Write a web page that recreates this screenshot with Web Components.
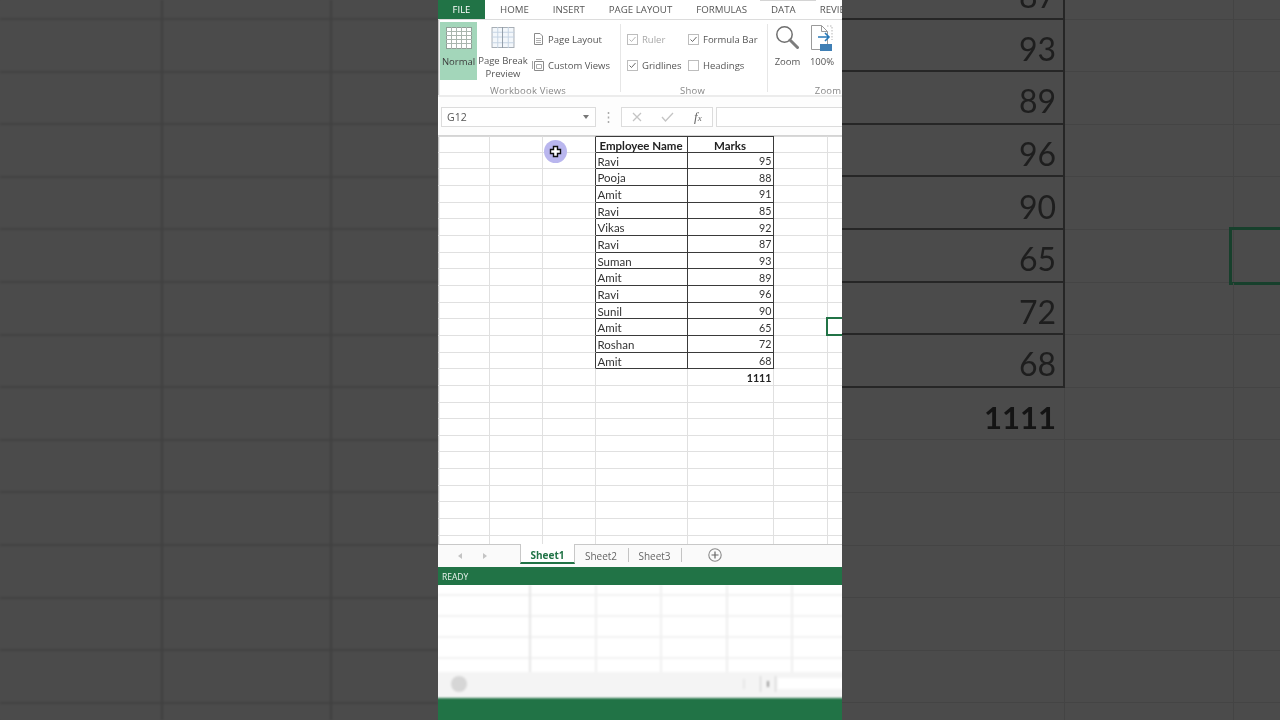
<!DOCTYPE html>
<html lang="en"><head><meta charset="utf-8"><title>Excel</title>
<style>
html,body{margin:0;padding:0;width:1280px;height:720px;overflow:hidden;background:#4b4b4b}
body{display:flex;font-family:"Open Sans","Liberation Sans",sans-serif}
</style></head><body>
<x-ghost-left></x-ghost-left>
<x-app></x-app>
<x-ghost-right></x-ghost-right>
<script>
function def(tag,html,setup){
  customElements.define(tag,class extends HTMLElement{
    constructor(){super();const r=this.attachShadow({mode:'open'});r.innerHTML=html;if(setup)setup(r,this);}
  });
}
def('x-ghost-left',`<style>:host{display:block;flex:0 0 438px;height:720px;filter:blur(.8px);
background:
 linear-gradient(90deg,transparent 161px,#3f3f3f 161px,#3f3f3f 163px,transparent 163px,transparent 330px,#3f3f3f 330px,#3f3f3f 332px,transparent 332px),
 repeating-linear-gradient(180deg,#414141 0,#414141 2px,transparent 2px,transparent 52.6px) 0 18px,
 #4b4b4b;background-repeat:no-repeat,repeat,repeat}</style>`);

def('x-ghost-right',`<style>
:host{display:block;flex:0 0 438px;height:720px;overflow:hidden;background:#4b4b4b}
.g{display:grid;grid-template-columns:223px 169px 56px;grid-auto-rows:52.6px;margin:-33px 0 0 -4px;padding-left:4px;filter:blur(.7px)}
.c{box-sizing:border-box;border-bottom:1px solid #444;border-right:1px solid #444;position:relative}
.n{display:flex;align-items:center;justify-content:flex-end;padding:8px 7px 0 0;font:32px/1 Lato,"Liberation Sans",sans-serif;color:#1e1e1e}
.t{border-bottom:2.500px solid #262626;border-right:2.500px solid #262626}
.b{font-weight:700;font-size:31px;color:#141414;padding-right:8px}
.sel{position:absolute;left:-5px;top:-3px;width:70px;height:58px;box-sizing:border-box;border:3px solid #17402c}
</style><div class="g" id="g"></div>`,r=>{
  const g=r.getElementById('g');let h='';
  ['87','93','89','96','90','65','72','68'].forEach(v=>{
    h+=`<div class="c n t">${v}</div><div class="c"></div><div class="c">${v==='65'?'<div class="sel"></div>':''}</div>`;
  });
  h+=`<div class="c n b">1111</div><div class="c"></div><div class="c"></div>`;
  for(let i=0;i<7;i++)h+=`<div class="c"></div><div class="c"></div><div class="c"></div>`;
  g.innerHTML=h;
});

def('x-app',`<style>:host{display:flex;flex-direction:column;flex:0 0 404px;width:404px;height:720px;overflow:hidden;background:#fff;color:#444}</style>
<x-tabs></x-tabs><x-ribbon></x-ribbon><x-formula></x-formula><x-sheet></x-sheet><x-sheet-tabs></x-sheet-tabs><x-status>READY</x-status><x-blurred></x-blurred>`);

def('x-tabs',`<style>
:host{display:flex;flex:0 0 20px;height:20px;box-sizing:border-box;border-bottom:1px solid #dcdcdc;font-size:9.700px;color:#555;align-items:center;overflow:hidden;white-space:nowrap;position:relative;filter:blur(.25px)}
.f{flex:0 0 47px;height:20px;background:#217346;color:#fff;display:flex;align-items:center;justify-content:center;font-size:9.500px;margin-right:14px}
.r{display:flex;gap:24px;margin-left:1px}
.top{position:absolute;left:322px;top:0;width:56px;height:1px;background:#d4d4d4}
</style><div class="f">FILE</div><div class="r"><span>HOME</span><span>INSERT</span><span>PAGE LAYOUT</span><span>FORMULAS</span><span>DATA</span><span>REVIEW</span></div><div class="top"></div>`);

def('x-check',`<style>
:host{display:flex;align-items:center;font-size:9.500px;color:#555;gap:4px;white-space:nowrap}
:host([dim]){color:#a8a8a8}
svg{flex:none;display:block}
</style><svg width="11" height="11" viewBox="0 0 11 11"><rect x=".5" y=".5" width="10" height="10" fill="#fff" stroke="#bdbdbd"/><path id="m" d="M2.500 5.500l2 2 4-4.500" fill="none" stroke="#666" stroke-width="1"/></svg><slot></slot>`,(r,h)=>{
  if(h.hasAttribute('off'))r.getElementById('m').remove();
  if(h.hasAttribute('dim'))r.getElementById('m').setAttribute('stroke','#b5b5b5');
});

def('x-group',`<style>
:host{display:flex;flex-direction:column;box-sizing:border-box;height:77px;position:relative}
.body{flex:1;min-height:0}
.lab{flex:0 0 15px;height:15px;display:flex;align-items:center;justify-content:center;font-size:9.500px;color:#888;letter-spacing:.2px;padding-top:2px;box-sizing:border-box;margin-bottom:0}
</style><div class="body"><slot></slot></div><div class="lab"><slot name="label"></slot></div>`);

def('x-ribbon',`<style>
:host{display:flex;flex:0 0 77px;height:77px;box-sizing:border-box;border-bottom:2px solid #ececec;overflow:hidden;font-size:9.500px;color:#555;filter:blur(.25px)}
x-group{flex:none}
.wb{width:182px}.sh{width:146px}.zm{width:76px}
.sep{flex:0 0 1px;background:#e6e6e6;margin:4px 0 3px}
.wrow{display:flex;padding-top:2px;height:60px;box-sizing:border-box}
.big{display:flex;flex-direction:column;align-items:center;text-align:center;line-height:13px;box-sizing:border-box;height:58px;padding-top:5px;white-space:nowrap}
.big svg{display:block;margin-bottom:6px}
.nor{width:37px;margin-left:2px;background:#a3d6ba;color:#3c3c3c}
.pb{width:50px;margin-left:1px}
.sm{display:grid;grid-template-rows:26px 26px;margin:4px 0 0 5px;white-space:nowrap}
.sm div{display:flex;align-items:center;gap:4px}
.chk{display:grid;grid-template-columns:61px auto;grid-template-rows:26px 26px;padding:6px 0 0 6px}
.zr{display:flex;padding-top:5px;height:60px;box-sizing:border-box}
.zb{display:flex;flex-direction:column;align-items:center;line-height:13px}
.zb svg{display:block;margin-bottom:6px}
.zb.a{width:39px}.zb.b{width:30px}
</style>
<x-group class="wb"><div class="wrow">
 <div class="big nor"><svg width="26" height="22" viewBox="0 0 26 22"><rect x=".5" y=".5" width="25" height="21" fill="#fff" stroke="#8f9f96"/><path d="M0 4.500h26M0 8.500h26M0 12.500h26M0 16.500h26M5.500 0v22M10.500 0v22M15.500 0v22M20.500 0v22" stroke="#a9b5ae" fill="none"/></svg>Normal</div>
 <div class="big pb"><svg width="24" height="22" viewBox="0 0 24 22"><rect x=".5" y=".5" width="23" height="21" fill="#f3f7fb" stroke="#a5acb3"/><path d="M0 5.500h24M0 10.500h24M0 16.500h24M6.500 0v22M17.500 0v22" stroke="#c3d2e2" fill="none"/><path d="M11.500 0v22" stroke="#8f9aa6" fill="none"/></svg>Page Break<br>Preview</div>
 <div class="sm"><div><svg width="11" height="12" viewBox="0 0 11 12"><path d="M1.500.5h5.500l2.500 2.500v8.500h-8z" fill="#fff" stroke="#8a8a8a"/><path d="M3 5.500h5M3 7.500h5M3 9.500h5" stroke="#b0b0b0" fill="none"/></svg><span>Page Layout</span></div>
 <div><svg width="12" height="12" viewBox="0 0 12 12" style="margin-left:-1px"><path d="M2.500 2.500h9v9h-9z" fill="#fff" stroke="#8a8a8a"/><path d="M.5 2v8M4 .5h6" stroke="#a5a5a5" fill="none"/><path d="M4.500 5.500h5v4h-5z" fill="none" stroke="#aaa"/></svg><span>Custom Views</span></div></div>
</div><span slot="label" style="margin-left:-2px">Workbook Views</span></x-group>
<div class="sep"></div>
<x-group class="sh"><div class="chk">
 <x-check dim>Ruler</x-check><x-check>Formula Bar</x-check>
 <x-check>Gridlines</x-check><x-check off>Headings</x-check>
</div><span slot="label" style="margin-left:-3px">Show</span></x-group>
<div class="sep"></div>
<x-group class="zm"><div class="zr">
 <div class="zb a"><svg width="24" height="24" viewBox="0 0 24 24" style="margin-left:-2px"><circle cx="9.500" cy="9.500" r="7.700" fill="#fff" stroke="#6f6f6f" stroke-width="1.500"/><path d="M15 15l7.500 7.500" stroke="#7d7d7d" stroke-width="3" stroke-linecap="round"/></svg>Zoom</div>
 <div class="zb b"><svg width="22" height="26" viewBox="0 0 22 26" style="margin-bottom:4px"><path d="M.5.5h10l6 6v18H.5z" fill="#fff" stroke="#9a9a9a"/><path d="M10.500.5v6h6" fill="none" stroke="#9a9a9a"/><path d="M16 1h5v14" fill="none" stroke="#b5b5b5" stroke-dasharray="1.500 1.500"/><path d="M7 12h11M14 8l4 4-4 4" fill="none" stroke="#2a7ab8" stroke-width="1.600"/><rect x="9" y="19" width="12" height="7" fill="#3f7fb5"/></svg>100%</div>
</div><span slot="label" style="padding-left:44px">Zoom</span></x-group>`);

def('x-formula',`<style>
:host{display:flex;flex:0 0 39px;height:39px;box-sizing:border-box;padding:10px 0 8px 3px;align-items:stretch;border-bottom:1px solid #d4d4d4;background:#fdfdfd;font-size:10.500px;color:#555;filter:blur(.25px)}
.box{background:#fff;border:1px solid #dcdcdc;box-sizing:border-box;display:flex;align-items:center}
.name{flex:0 0 155px;padding:0 6px 0 5px;justify-content:space-between}
.arr{width:0;height:0;border:3px solid transparent;border-top:4px solid #777;border-bottom:0;margin-right:0}
.dots{flex:0 0 25px;display:flex;align-items:center;justify-content:center}
.fx{flex:0 0 92px;padding-left:10px;gap:19px;margin-right:3px}
.inp{flex:1;border-right:0}
svg{display:block}
i{font:italic 13px "Liberation Serif",serif;color:#666;margin-left:1px}
i small{font-size:9px}
</style><div class="box name"><span>G12</span><span class="arr"></span></div>
<div class="dots"><svg width="3" height="11"><path d="M1.500 0v2M1.500 4.500v2M1.500 9v2" stroke="#aaa" stroke-width="1.500"/></svg></div>
<div class="box fx"><svg width="10" height="10" viewBox="0 0 10 10"><path d="M1 1l8 8M9 1l-8 8" stroke="#c4c4c4" stroke-width="1.300"/></svg><svg width="13" height="10" viewBox="0 0 13 10"><path d="M1 5l3.500 4L12 1" fill="none" stroke="#c4c4c4" stroke-width="1.300"/></svg><i>f<small>x</small></i></div>
<div class="box inp"></div>`);

def('x-sheet',`<style>
:host{display:block;flex:0 0 408px;height:408px;overflow:hidden;position:relative;font:11.500px/1 Lato,"Liberation Sans",sans-serif;color:#333}
.g{display:grid;grid-template-columns:55.500px 53px 53px 92px 86px 54px 18.500px;grid-auto-rows:16.670px;margin:0 -4px 0 -4px;filter:blur(.3px)}
.c{box-sizing:border-box;border-right:1px solid #e0e0e0;border-bottom:1px solid #e0e0e0;display:flex;align-items:center;white-space:nowrap;position:relative;padding-top:2px}
.top{border-top:1px solid #d8d8d8}
.R{border-right-color:#3a3a3a}.B{border-bottom-color:#3a3a3a}.T{border-top:1px solid #3a3a3a}
.l{padding-left:2px}.r{justify-content:flex-end;padding-right:1px;font-size:10.700px}
.h{justify-content:center;font-weight:700;color:#222}
.ttl{font-weight:700;color:#222}
.sel{position:absolute;left:-2px;top:-2px;width:30px;height:19px;box-sizing:border-box;border:2px solid #217346}
.cur{position:absolute;left:106px;top:4px;display:block}
</style><div class="g" id="g"></div>
<svg class="cur" width="23" height="23" viewBox="0 0 23 23"><circle cx="11.500" cy="11.500" r="11.500" fill="#b9b6ee"/><path d="M9.500 6.500h4v3h3v4h-3v3h-4v-3h-3v-4h3z" fill="#fff" stroke="#111" stroke-width="1.400"/></svg>`,r=>{
  const data=[['Ravi',95],['Pooja',88],['Amit',91],['Ravi',85],['Vikas',92],['Ravi',87],['Suman',93],['Amit',89],['Ravi',96],['Sunil',90],['Amit',65],['Roshan',72],['Amit',68]];
  let h='';
  for(let i=0;i<25;i++){
    const top=i===0?' top':'';
    const inT=i<14;
    let cells=[`<div class="c${top}"></div>`,`<div class="c${top}"></div>`,`<div class="c${top}${inT?' R':''}"></div>`];
    if(i===0){
      cells.push(`<div class="c h R B T">Employee Name</div><div class="c h R B T">Marks</div>`);
    }else if(i<14){
      cells.push(`<div class="c l R B">${data[i-1][0]}</div><div class="c r R B">${data[i-1][1]}</div>`);
    }else if(i===14){
      cells.push(`<div class="c"></div><div class="c r ttl">1111</div>`);
    }else cells.push(`<div class="c"></div><div class="c"></div>`);
    cells.push(`<div class="c${top}"></div><div class="c${top}" style="border-right:0">${i===11?'<div class="sel"></div>':''}</div>`);
    h+=cells.join('');
  }
  r.getElementById('g').innerHTML=h;
});

def('x-sheet-tabs',`<style>
:host{display:flex;flex:0 0 23px;height:23px;box-sizing:border-box;background:#fafafa;border-top:1px solid #c8c8c8;font-size:10px;color:#666;align-items:stretch;filter:blur(.25px);position:relative}
.nav{flex:0 0 82px;display:flex;align-items:center;gap:21px;padding-left:20px;box-sizing:border-box}
.l,.r{width:0;height:0;border:3px solid transparent}
.l{border-right:4px solid #c4c4c4;border-left:0}.r{border-left:4px solid #c4c4c4;border-right:0}
.act{flex:0 0 55px;box-sizing:border-box;margin-top:-1px;height:20px;padding-top:3px;border:1px solid #c8c8c8;border-top:0;border-bottom:2px solid #217346;color:#217346;font-weight:700;display:flex;align-items:center;justify-content:center;background:#fff}
.t{flex:0 0 53px;display:flex;align-items:center;justify-content:center;margin-left:-.5px}
.s{flex:0 0 1px;background:#c4c4c4;margin:3px 0 5px}
.plus{margin:3px 0 0 26px;display:block}
</style><div class="nav"><span class="l"></span><span class="r"></span></div>
<div class="act">Sheet1</div><div class="t">Sheet2</div><div class="s"></div><div class="t">Sheet3</div><div class="s"></div>
<svg class="plus" width="14" height="14" viewBox="0 0 14 14"><circle cx="7" cy="7" r="6.200" fill="none" stroke="#8c8c8c" stroke-width="1.100"/><path d="M7 3.500v7M3.500 7h7" stroke="#666" stroke-width="1.200"/></svg>`);

def('x-status',`<style>:host{display:flex;align-items:center;flex:0 0 18px;height:18px;box-sizing:border-box;padding-left:4px;background:#217346;color:#e8f2ec;font-size:8.500px;filter:blur(.2px)}</style><slot></slot>`);

def('x-blurred',`<style>
:host{display:block;flex:1;min-height:0;overflow:hidden}
.in{display:flex;flex-direction:column;height:143px;margin:0 -5px;filter:blur(1.300px)}
.g{flex:0 0 87px;background:
 linear-gradient(90deg,transparent 96px,#e6e6e6 96px,#e6e6e6 98px,transparent 98px,transparent 162px,#f0f0f0 162px,#f0f0f0 164px,transparent 164px,transparent 227px,#f0f0f0 227px,#f0f0f0 229px,transparent 229px,transparent 293px,#eeeeee 293px,#eeeeee 295px,transparent 295px,transparent 358px,#eeeeee 358px,#eeeeee 360px,transparent 360px),
 repeating-linear-gradient(180deg,transparent 0,transparent 9px,#f2f2f2 9px,#f2f2f2 11px,transparent 11px,transparent 21px),#fff}
.bar{flex:0 0 26px;background:#f4f4f4;display:flex;align-items:center;padding:0 0 3px 18px;box-sizing:border-box}
.dot{flex:none;width:16px;height:16px;border-radius:50%;background:#d6d6d6}
.sc{flex:none;margin-left:276px;width:2px;height:10px;background:#e6e6e6}
.th{flex:none;margin-left:15px;width:14px;height:16px;border:1px solid #cfcfcf;border-width:0 1px;display:flex;align-items:center;justify-content:center}
.th i{display:block;width:2px;height:6px;background:#999}
.w{flex:1;height:11px;background:#fff;margin-left:2px}
.gr{flex:1;background:#217346}
</style><div class="in"><div class="g"></div><div class="bar"><span class="dot"></span><span class="sc"></span><span class="th"><i></i></span><span class="w"></span></div><div class="gr"></div></div>`);
</script>
</body></html>
